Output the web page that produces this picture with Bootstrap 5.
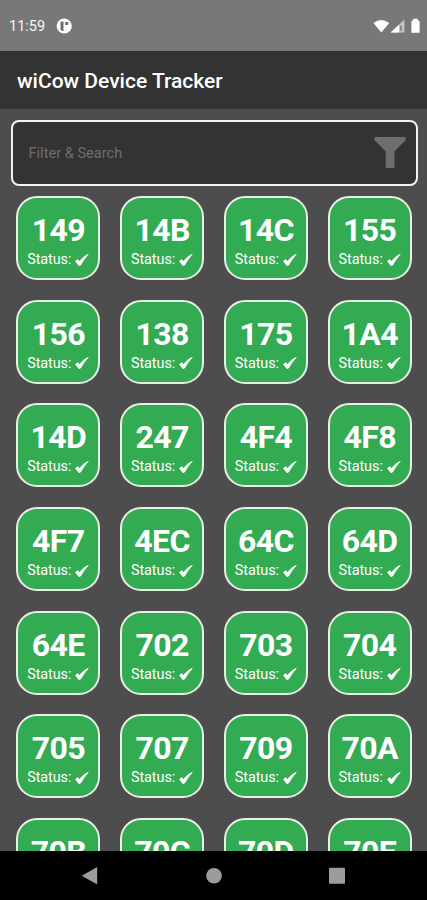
<!DOCTYPE html>
<html lang="en">
<head>
<meta charset="utf-8">
<meta name="viewport" content="width=device-width, initial-scale=1">
<title>wiCow Device Tracker</title>
<link href="https://cdn.jsdelivr.net/npm/bootstrap@5.3.0/dist/css/bootstrap.min.css" rel="stylesheet">
<style>
body{font-family:Roboto,"Liberation Sans",sans-serif;background:#4d4d4d;color:#fff}
.status-bar{height:51px;background:#787878;padding:3px 6px 0 9px;font-size:14.5px;color:#f4f4f4}
.app-bar{height:58px;background:#333;padding:4px 17px 0;font-size:21px;font-weight:500}
.search-box{height:66px;margin:10.5px 9px 0 10.5px;border:2.5px solid #f2f2f2;border-radius:8px;background:#333;padding:0 10px 0 16px}
.search-box input,.search-box input:focus{font-size:14.6px;color:#fff;background:transparent;border:0;box-shadow:none;padding:2px 0 0}
.search-box input::placeholder{color:#6d6d6d;opacity:1}
.tile-grid{display:grid;grid-template-columns:repeat(4,84px);column-gap:19.8px;row-gap:19.65px;padding:10.6px 0 0 16.3px}
.tile{height:84px;border:2.5px solid #e9efe6;border-radius:21px;background:#32ab52;padding-top:13px}
.tile-id{font-size:32px;line-height:39px;font-weight:700;letter-spacing:-.6px}
.tile-status{font-size:14.4px;line-height:20px;gap:4px;letter-spacing:-.05px}
.nav-keys{height:49px;background:#000}
.nav-keys svg{display:block}
</style>
</head>
<body>
<div class="vh-100 d-flex flex-column overflow-hidden">
  <header class="status-bar d-flex align-items-center flex-shrink-0">
    <span>11:59</span>
    <svg class="ms-2" width="22" height="18" viewBox="0 0 22 18"><circle cx="11.200" cy="8" r="7.600" fill="#fff"/><path d="M7.500 3.600h3v9.400H9L7.500 11.600zM12.200 3.900h3.100v3.100h-3.100z" fill="#6f6f6f"/></svg>
    <svg class="ms-auto" width="50" height="18" viewBox="0 0 50 18"><path d="M2.400 5Q10.300-1.200 18.200 5L10.300 14.600z" fill="#fff"/><path d="M19.600 14.600 33.400 1.600v13z" fill="#c4c4c4"/><path d="M19.600 14.600l8.400-7.900v7.900z" fill="#fff"/><path d="M30 7.400v5.700" stroke="#777" stroke-width="1.500"/><path d="M40.700 4Q40.700 2.500 42.500 2.200V1h4v1.200Q48.300 2.500 48.300 4v10.600h-7.600z" fill="#fff" stroke="#fff" stroke-width=".6" stroke-linejoin="round"/></svg>
  </header>
  <div class="app-bar d-flex align-items-center flex-shrink-0">wiCow Device Tracker</div>
  <div class="search-box d-flex align-items-center flex-shrink-0">
    <input class="form-control" type="text" placeholder="Filter &amp; Search" aria-label="Filter and search">
    <svg class="flex-shrink-0" width="32" height="32" viewBox="0 0 32 32"><path d="M.5 0h31v3.200L20.500 14.500v16.500h-8.800V14.500L.5 3.200z" fill="#6e6e6e"/></svg>
  </div>
  <main class="tile-grid flex-grow-1 overflow-hidden align-content-start" id="tiles"></main>
  <nav class="nav-keys flex-shrink-0">
    <svg width="427" height="49" viewBox="0 0 427 49" fill="#9c9c9c"><path d="M81.800 24.800 97.200 16v17.600z"/><circle cx="214" cy="24.800" r="7.800"/><rect x="329" y="16.700" width="16" height="16" rx=".8"/></svg>
  </nav>
</div>
<script>
const ids = ['149','14B','14C','155','156','138','175','1A4','14D','247','4F4','4F8','4F7','4EC','64C','64D','64E','702','703','704','705','707','709','70A','70B','70C','70D','70E'];
document.getElementById('tiles').innerHTML = ids.map(id => `
  <div class="tile text-center">
    <div class="tile-id">${id}</div>
    <div class="tile-status d-flex justify-content-center align-items-center"><span>Status:</span><svg width="14" height="13" viewBox="0 0 14 13"><path d="M.6 7.200 3 5.700 4.600 7.800C6.800 4.600 9.500 1.800 13.200.6 10.400 3.400 8 6.700 5.600 11L3.900 11.500z" fill="#fff" stroke="#fff" stroke-width="1"/></svg></div>
  </div>`).join('');
</script>
<script src="https://cdn.jsdelivr.net/npm/bootstrap@5.3.0/dist/js/bootstrap.bundle.min.js"></script>
</body>
</html>
